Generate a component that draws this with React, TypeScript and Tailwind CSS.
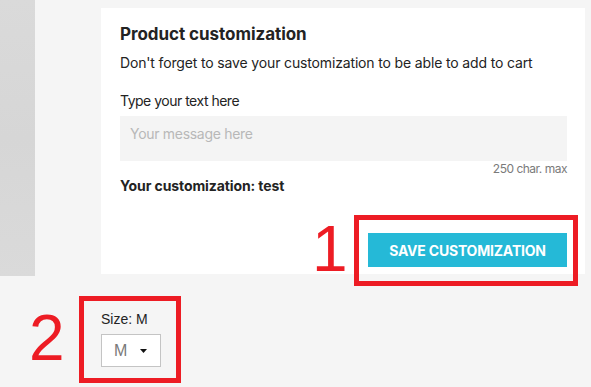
import React from 'react';

const App = () => {
  return (
    <div className="relative w-[591px] h-[387px] overflow-hidden bg-[#f5f5f5] font-['Inter',sans-serif] text-[#232323]">
      <div className="flex items-start">
        {/* left image edge */}
        <div className="w-[35px] h-[276px] bg-gradient-to-b from-[#dadada] via-[#d6d6d6] to-[#dadada]" />

        {/* customization card */}
        <div className="ml-[66px] mt-[8px] w-[484px] h-[266px] bg-white pl-[19px] pr-[18px] pt-[15px] flex flex-col">
          <h3 className="text-[17px] leading-[22px] font-bold tracking-[-0.05px]">Product customization</h3>
          <p className="mt-[8px] text-[14px] leading-[20px] tracking-[-0.15px]">
            Don't forget to save your customization to be able to add to cart
          </p>
          <label className="mt-[18px] text-[14px] leading-[20px] tracking-[-0.5px]">Type your text here</label>
          <div className="mt-[5px] h-[45px] bg-[#f4f4f4] px-[10px] pt-[8px] text-[14px] leading-[20px] tracking-[-0.3px] text-[#b8b8b8]">
            Your message here
          </div>
          <div className="text-right text-[12px] leading-[16px] tracking-[-0.5px] text-[#7a7a7a]">250 char. max</div>
          <div className="text-[14px] leading-[18px] font-bold tracking-[-0.1px]">Your customization: test</div>
          <div className="mt-[38px] flex justify-end">
            <button className="w-[199px] h-[34px] bg-[#25b9d7] text-white text-[14px] font-bold uppercase tracking-[-0.2px]">
              Save customization
            </button>
          </div>
        </div>
      </div>

      {/* size selector */}
      <div className="ml-[101px] mt-[35px] font-['Liberation_Sans',Arial,sans-serif]">
        <div className="text-[14px] leading-[16px] text-[#232323]">Size: M</div>
        <div className="mt-[7px] w-[60px] h-[33px] bg-white border border-[#c4c4c4] flex items-center pl-[12px]">
          <span className="text-[16px] text-[#7a7a7a]">M</span>
          <svg className="ml-[13px]" width="7" height="4" viewBox="0 0 7 4">
            <path d="M0 0h7L3.5 4z" fill="#111" />
          </svg>
        </div>
      </div>

      {/* annotations */}
      <div className="absolute left-[354px] top-[215px] w-[224px] h-[71px] border-[5px] border-[#ed1c24]" />
      <div className="absolute left-[312px] top-[213px] text-[64px] leading-[72px] text-[#ed1c24] font-['Liberation_Sans',Arial,sans-serif]">1</div>
      <div className="absolute left-[79px] top-[296px] w-[102px] h-[87px] border-[5px] border-[#ed1c24]" />
      <div className="absolute left-[29px] top-[302px] text-[64px] leading-[72px] text-[#ed1c24] font-['Liberation_Sans',Arial,sans-serif]">2</div>
    </div>
  );
};

export default App;
